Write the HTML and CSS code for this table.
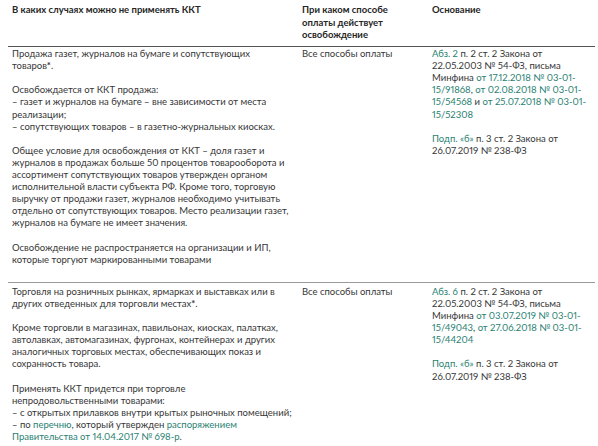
FILE: index.html
```html
<!DOCTYPE html>
<html lang="ru">
<head>
<meta charset="utf-8">
<link rel="stylesheet" href="styles.css">
</head>
<body>
<table class="kkt">
  <colgroup>
    <col class="c1"><col class="c2"><col class="c3">
  </colgroup>
  <thead>
    <tr>
      <th>В каких случаях можно не применять ККТ</th>
      <th>При каком способе оплаты действует освобождение</th>
      <th>Основание</th>
    </tr>
  </thead>
  <tbody>
    <tr>
      <td>
        <p>Продажа газет, журналов на бумаге и сопутствующих товаров<b>*</b>.</p>
        <p>Освобождается от ККТ продажа:<br>– газет и журналов на бумаге – вне зависимости от места реализации;<br>– сопутствующих товаров – в газетно-журнальных киосках.</p>
        <p>Общее условие для освобождения от ККТ – доля газет и журналов в продажах больше 50 процентов товарооборота и ассортимент сопутствующих товаров утвержден органом исполнительной власти субъекта РФ. Кроме того, торговую выручку от продажи газет, журналов необходимо учитывать отдельно от сопутствующих товаров. Место реализации газет, журналов на бумаге не имеет значения.</p>
        <p>Освобождение не распространяется на организации и ИП, которые торгуют маркированными товарами</p>
      </td>
      <td><p>Все способы оплаты</p></td>
      <td>
        <p><a href="#">Абз. 2</a> п. 2 ст. 2 Закона от 22.05.2003 № 54-ФЗ, письма Минфина <a href="#">от 17.12.2018 № 03-01-15/91868</a>, <a href="#">от 02.08.2018 № 03-01-15/54568</a> и <a href="#">от 25.07.2018 № 03-01-15/52308</a></p>
        <p><a href="#">Подп. «б»</a> п. 3 ст. 2 Закона от 26.07.2019 № 238-ФЗ</p>
      </td>
    </tr>
    <tr>
      <td>
        <p>Торговля на розничных рынках, ярмарках и выставках или в других отведенных для торговли местах<b>*</b>.</p>
        <p>Кроме торговли в магазинах, павильонах, киосках, палатках, автолавках, автомагазинах, фургонах, контейнерах и других аналогичных торговых местах, обеспечивающих показ и сохранность товара.</p>
        <p>Применять ККТ придется при торговле непродовольственными товарами:<br>– с открытых прилавков внутри крытых рыночных помещений;<br>– по <a href="#">перечню</a>, который утвержден <a href="#">распоряжением Правительства от 14.04.2017 № 698-р</a>.</p>
      </td>
      <td><p>Все способы оплаты</p></td>
      <td>
        <p><a href="#">Абз. 6</a> п. 2 ст. 2 Закона от 22.05.2003 № 54-ФЗ, письма Минфина <a href="#">от 03.07.2019 № 03-01-15/49043</a>, <a href="#">от 27.06.2018 № 03-01-15/44204</a></p>
        <p><a href="#">Подп. «б»</a> п. 3 ст. 2 Закона от 26.07.2019 № 238-ФЗ</p>
      </td>
    </tr>
  </tbody>
</table>
</body>
</html>
```

FILE: styles.css
```css
html, body {
  margin: 0;
  padding: 0;
  background: #fff;
}
body {
  padding: 0 8px;
  font-family: "Lato", "Liberation Sans", sans-serif;
  color: #363636;
}
.kkt {
  width: 587px;
  border-collapse: collapse;
  table-layout: fixed;
  font-size: 9.5px;
  line-height: 12.1px;
  font-variant-numeric: proportional-nums;
}
.c1 { width: 290px; }
.c2 { width: 130px; }
.c3 { width: 167px; }
.kkt th {
  text-align: left;
  vertical-align: top;
  font-weight: 700;
  color: #262626;
  line-height: 12.7px;
  padding: 4px 8px 4px 4px;
  height: 36px;
  border-bottom: 1.5px solid #555;
}
.kkt td {
  vertical-align: top;
  padding: 1px 8px 4px 4px;
  border-bottom: 1.5px solid #9a9a9a;
}
.kkt td:first-child {
  padding-right: 6px;
}
.kkt td:last-child {
  padding-right: 6px;
}
.kkt th:last-child {
  padding-right: 6px;
}
.kkt tbody tr + tr td {
  padding-top: 3px;
}
.kkt p {
  margin: 0 0 12.1px;
}
.kkt a {
  color: #2a7f72;
  text-decoration: none;
}
.kkt b {
  font-weight: 700;
}
```
